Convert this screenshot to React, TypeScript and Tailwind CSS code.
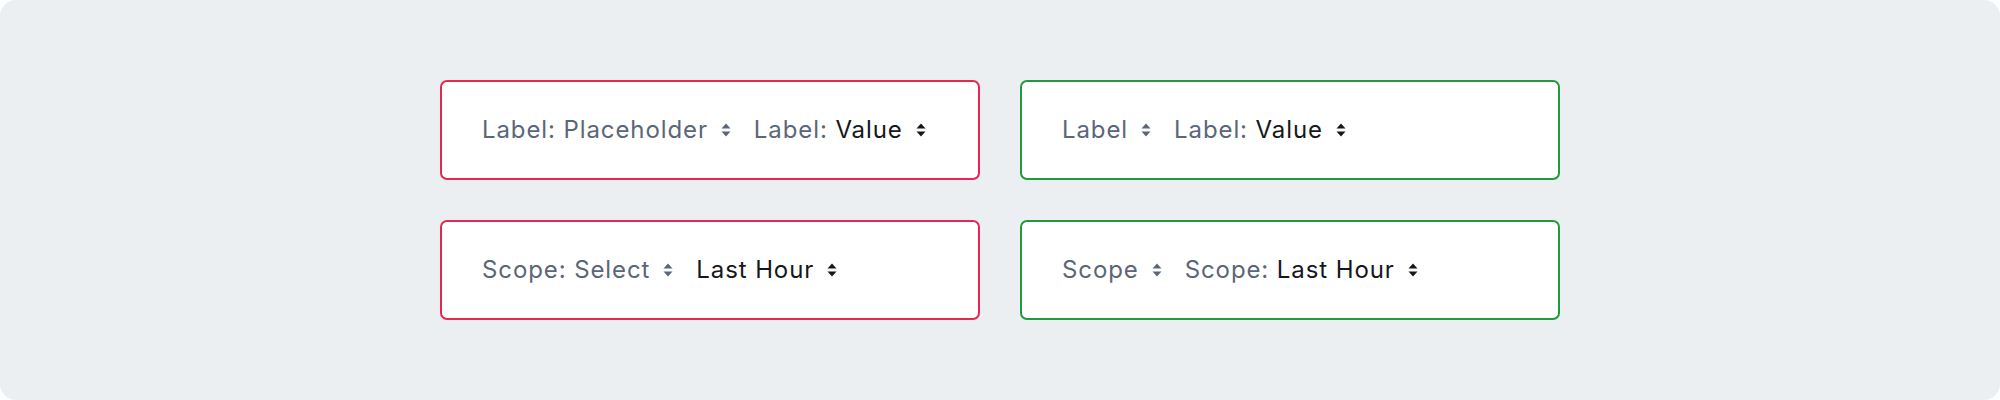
import React from 'react';

function Sort({ dark }: { dark?: boolean }) {
  return (
    <svg width="10" height="16" viewBox="0 0 10 16" className={dark ? 'text-[#15171c]' : 'text-[#5b6679]'}>
      <path d="M5 1.5 L9.5 6.5 L0.5 6.5 Z" fill="currentColor" />
      <path d="M5 14.5 L9.5 9.5 L0.5 9.5 Z" fill="currentColor" />
    </svg>
  );
}

function Field({ label, value, dark }: { label?: string; value: string; dark?: boolean }) {
  return (
    <div className="flex items-center gap-[13px]">
      <span className="whitespace-nowrap">
        {label && <span className="text-[#5b6679]">{label}</span>}
        <span className={dark ? 'text-[#15171c]' : 'text-[#5b6679]'}>{value}</span>
      </span>
      <Sort dark={dark} />
    </div>
  );
}

function Card({ tone, children }: { tone: 'error' | 'ok'; children: React.ReactNode }) {
  return (
    <div
      className={
        'h-[100px] bg-white rounded-[7px] border-2 flex items-center gap-[23px] px-[40px] ' +
        (tone === 'error' ? 'border-[#e8264f]' : 'border-[#1f9a3c]')
      }
    >
      {children}
    </div>
  );
}

export default function App() {
  return (
    <div className="w-[2000px] h-[400px] bg-white">
      <div className="w-full h-full rounded-[16px] bg-[#eceff2] flex items-center justify-center font-['Inter',sans-serif] text-[24px] tracking-[0.9px]">
        <div className="grid grid-cols-[540px_540px] gap-10">
          <Card tone="error">
            <Field value="Label: Placeholder" />
            <Field label="Label: " value="Value" dark />
          </Card>
          <Card tone="ok">
            <Field value="Label" />
            <Field label="Label: " value="Value" dark />
          </Card>
          <Card tone="error">
            <Field value="Scope: Select" />
            <Field value="Last Hour" dark />
          </Card>
          <Card tone="ok">
            <Field value="Scope" />
            <Field label="Scope: " value="Last Hour" dark />
          </Card>
        </div>
      </div>
    </div>
  );
}
